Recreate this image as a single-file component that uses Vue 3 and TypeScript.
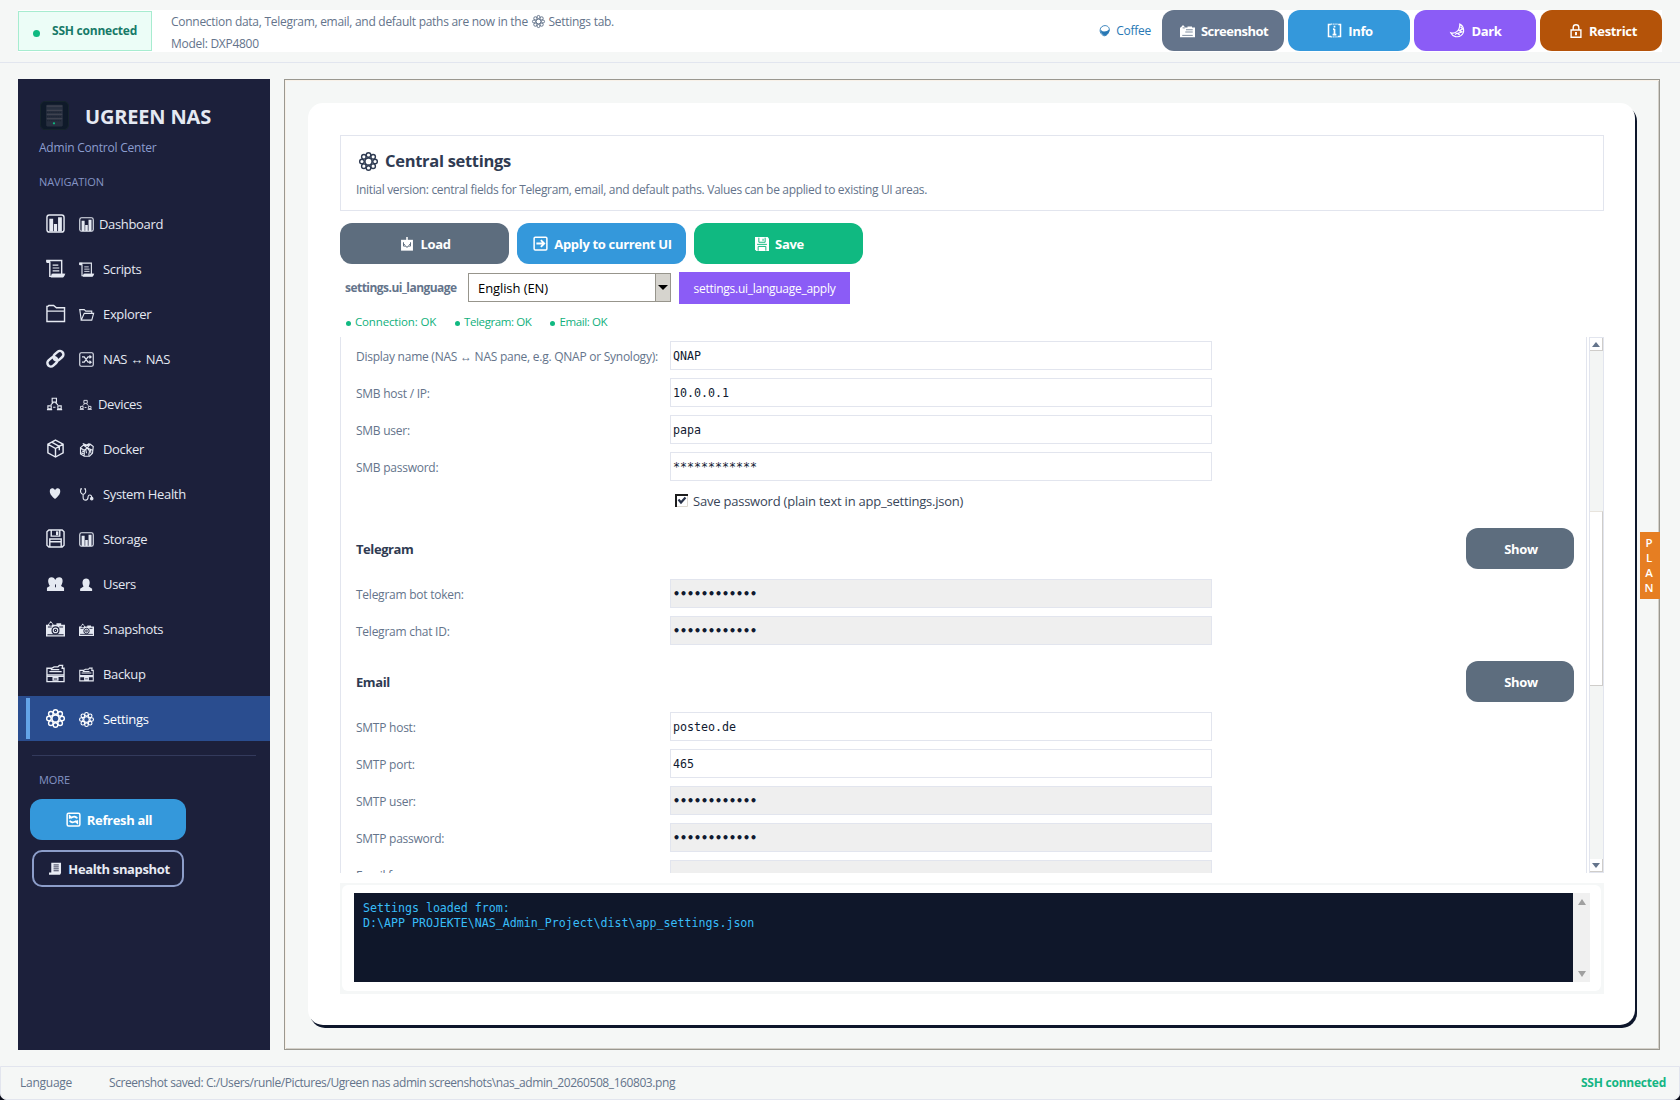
<script setup lang="ts">
interface NavItem {
  icon: string
  small: string
  label: string
  shift?: number
}

interface Field {
  label: string
  value: string
  masked?: boolean
}

const gearPetals = Array.from({ length: 8 }, (_, i) => {
  const a = (i * Math.PI) / 4
  const x = (10 + Math.cos(a) * 6.9).toFixed(2)
  const y = (10 + Math.sin(a) * 6.9).toFixed(2)
  return `<circle cx="${x}" cy="${y}" r="2.4"/>`
}).join('')

const icons: Record<string, string> = {
  chart:
    '<rect x="1" y="1" width="18" height="18" rx="2.5"/><path fill="currentColor" stroke="none" d="M3.500 5h4v13.500h-4zM8.300 10.500h3.400v8H8.300zM12.700 3.500h4v15h-4z"/>',
  scroll:
    '<path d="M1 3.500V1.500h15.500v15M4 3.500v14.800h13.500l1.500-2H7M1 3.500h3"/><path d="M7 6.500h6M7 9.500h7M7 12.500h7" stroke-width="1.200"/><path fill="currentColor" stroke="none" d="M6 15.500h13.500v2L18 19.500H5zM.500 1h4v3H.500z"/>',
  folder: '<path d="M1 18.500V2.500h1l1-1h5l3 2.500h8.500v14.500zM1 7.500h18"/>',
  folderOpen: '<path d="M3 17.500 1 3.500h6l2 2h8v3M3 17.500l4-9h12.500l-2.500 9z"/>',
  link:
    '<g stroke-width="2.600" transform="rotate(-42 10 10)"><rect x="-.5" y="6.600" width="11.500" height="7.400" rx="3.700"/><rect x="8.500" y="6.200" width="11.500" height="7.400" rx="3.700"/></g>',
  shuffle:
    '<rect x="1" y="1" width="18" height="18" rx="2"/><path d="M4 6.500h3l5 7h4M4 13.500h3l5-7h4M14 4.500l2.200 2-2.200 2M14 11.500l2.200 2-2.200 2" stroke-width="1.600"/>',
  network:
    '<path d="M6.500 4.500h4.500v4H6.500zM2 12.500h3.500v3H2zM12.500 12.500H16v3h-3.500zM7.500 9l-2.500 2.500M10 9l2.500 2.500M1 16.500h5.500M11.500 16.500h5.500M7.500 14h2.500" stroke-width="1.200"/>',
  box:
    '<path d="M10 1.200 18 5.500v9L10 19l-8-4.500v-9zM2 5.500l8 4.500 8-4.500M10 10v9M6 3.300l8 4.500v4"/>',
  whale:
    '<path d="M2 7.500 6 4l5 1 4-2 4 3-1 9-4 4H7l-5-3zM2 8l5 3 4-3 7 3M7 11v7M11 8l3 4-1 6M4 12l3 1M6 4l5 4 4-5M5 2l5 2 4-2M3 14.500l3 1M9 10l1 5M15 9l1 6"/>',
  heart:
    '<path fill="currentColor" stroke="none" d="M9.500 15.800C7 13.500 4 11 4 7.500 4 3.800 8 3.600 9.500 6.500 11 3.600 15 3.800 15 7.500c0 3.500-3 6-5.500 8.300z"/>',
  stetho:
    '<path d="M4 2.500H2.500C1.500 6 2 9 5.500 10 9 9 9.500 6 8.500 2.500H7M5.500 10v4c0 5 6.500 4.500 6.500 0 0-5 5-4 5 0" /><circle cx="17" cy="15.500" r="1.600" fill="currentColor"/>',
  floppy:
    '<path d="M1 3l2-2h14l2 2v14l-2 2H3l-2-2zM5.500 1v6.500h9V1M4 19v-8.500h12V19M4 13.500h12"/><path fill="currentColor" stroke="none" d="M10.500 2.500h2.500v4h-2.500z"/>',
  users:
    '<path fill="currentColor" stroke="none" d="M1 18v-3.500l3-2C1.500 9 1.500 3.500 5.800 3.500 8 3.500 9.200 5 9.700 6.300 10.300 5 11.700 3.500 14 3.500c4.300 0 4.300 5.500 1.800 9L19 14.500V18z"/><path d="M10 11v3" stroke="var(--hole)" stroke-width="1"/>',
  user:
    '<path fill="currentColor" stroke="none" d="M1.500 18.500v-3L6 12.500C3.500 8 4.500 2 9.500 2s6 6 3.500 10.500l4.500 3v3z"/>',
  camera:
    '<path fill="currentColor" stroke="none" d="M0 6h2l3-4 3 4h3V4.500h5V6h4v12.500H0z"/><path fill="none" stroke="var(--hole)" stroke-width="1.100" d="M2 8.500h4M14 8.500h4M1.500 16.500h17"/><circle cx="10" cy="12" r="3.600" fill="currentColor" stroke="var(--hole)" stroke-width="1.300"/><circle cx="10" cy="12" r="1.200" stroke="var(--hole)" stroke-width="1.200"/><circle cx="5" cy="5.500" r="1.600" fill="var(--hole)" stroke="none"/>',
  cameraSolid:
    '<path fill="currentColor" stroke="none" d="M0 6h1l3-3.500L7 6h3V4.500h6V6h4v13H0z"/><path stroke="var(--hole)" stroke-width="1.100" d="M8 9h9M7 12h10M3 16.500h14M3.500 6.500h3"/>',
  cabinet:
    '<path d="M1 4.500h5L8.500 3h4L14 1.500h3.500l-.5 3h2V18.500H1zM1 11.500h18M3.500 8h13M5 6h9M1 13h18M7.500 14.500h5V17h-5z" stroke-width="1.400"/>',
  gear: gearPetals + '<circle cx="10" cy="10" r="3.700"/>',
  coffee:
    '<path d="M2 8c0-4 4-7 8-7s8 3 7 8-5 9-8 9-8-5-7-10z"/><path fill="currentColor" d="M3 9c4 4 10 3 14-1-1 6-4 9-7 9s-6-3-7-8z"/>',
  info:
    '<path d="M5 2H2v16h3.500M15 2h3v16h-3.500" stroke-width="2"/><path d="M5 1.500h10M5 18.500h10" stroke-width="1.500" stroke-dasharray="1.500 1"/><path d="M10 3.500v2.400M10 8v7.500M7.500 15.500h5M8 8.200h2" stroke-width="2.300"/>',
  moon:
    '<path d="M13 1.500c6 3 7 11 2 15-4.500 3.500-11.500 2-14-3.500 5 2 12.500-2 12-11.500z"/><path d="M14 5l3 3-5 2 4 2-6 2 3 2M7 15.500l2-2M13 11l2-2" stroke-width="1.700"/>',
  lock:
    '<path d="M3 8.500h14v10.500H3zM6 8.500V5c0-5.200 8-5.200 8 0v3.500" stroke-width="2"/><path d="M10 11.500v4.500" stroke-width="2.800"/>',
  inbox:
    '<path fill="currentColor" stroke="none" d="M1.500 4h17v15.500h-17z"/><path stroke="var(--hole)" stroke-width="1.400" d="M5 7.500v5.500h3.500l1.500 2 1.500-2H15V7.500M5 9.500l2.500 2.500M15 9.500l-2.500 2.500"/><path d="M10 0v9.500M6.500 5.500 10 9l3.500-3.500" stroke-width="2.200"/>',
  arrow:
    '<rect x="1.500" y="1.500" width="17" height="17" rx="1.500" stroke-width="2"/><path d="M4.500 10h10M10.500 5.500l4.500 4.500-4.500 4.500" stroke-width="2.400"/>',
  save:
    '<path fill="currentColor" stroke="none" d="M0 0h18l2 2v18H2l-2-2z"/><path stroke="var(--hole)" stroke-width="1.400" d="M5.500 1v6.500h9V1M11.500 2.500v3M3 10.500h14M4.500 19.500V13.500h11v6"/>',
  refresh:
    '<rect x="1.500" y="1.500" width="17" height="17" rx="2" stroke-width="2"/><path d="M5 9V5.500l2.500 2c3-2 6-1.500 7.500 1M15 11v3.500l-2.500-2c-3 2-6 1.500-7.500-1" stroke-width="2.400"/>',
  report:
    '<path fill="currentColor" stroke="none" d="M3.500 1h15v16L17 19.500H0V16h3.500z"/><path stroke="var(--hole)" stroke-width="1.300" d="M7 4.500h8M7 7.500h8M7 10.500h8M7 13.500h8"/>',
}

const nav: NavItem[] = [
  { icon: 'chart', small: 'chart', label: 'Dashboard', shift: -4 },
  { icon: 'scroll', small: 'scroll', label: 'Scripts' },
  { icon: 'folder', small: 'folderOpen', label: 'Explorer' },
  { icon: 'link', small: 'shuffle', label: 'NAS ↔ NAS' },
  { icon: 'network', small: 'network', label: 'Devices', shift: -5 },
  { icon: 'box', small: 'whale', label: 'Docker' },
  { icon: 'heart', small: 'stetho', label: 'System Health' },
  { icon: 'floppy', small: 'chart', label: 'Storage' },
  { icon: 'users', small: 'user', label: 'Users' },
  { icon: 'camera', small: 'camera', label: 'Snapshots' },
  { icon: 'cabinet', small: 'cabinet', label: 'Backup' },
  { icon: 'gear', small: 'gear', label: 'Settings' },
]

const active = 'Settings'
const mask = '••••••••••••'

const smb: Field[] = [
  { label: 'Display name (NAS ↔ NAS pane, e.g. QNAP or Synology):', value: 'QNAP' },
  { label: 'SMB host / IP:', value: '10.0.0.1' },
  { label: 'SMB user:', value: 'papa' },
  { label: 'SMB password:', value: '************' },
]
const telegram: Field[] = [
  { label: 'Telegram bot token:', value: mask, masked: true },
  { label: 'Telegram chat ID:', value: mask, masked: true },
]
const email: Field[] = [
  { label: 'SMTP host:', value: 'posteo.de' },
  { label: 'SMTP port:', value: '465' },
  { label: 'SMTP user:', value: mask, masked: true },
  { label: 'SMTP password:', value: mask, masked: true },
  { label: 'Email from:', value: '', masked: true },
]
const sections = [
  { title: '', fields: smb },
  { title: 'Telegram', fields: telegram },
  { title: 'Email', fields: email },
]
const statuses = ['Connection: OK', 'Telegram: OK', 'Email: OK']
const plan = ['P', 'L', 'A', 'N']
</script>

<template>
  <div class="app">
    <header class="top">
      <div class="band">
        <div class="badge"><i class="dot"></i><b>SSH connected</b></div>
        <div class="hints">
          <p>
            Connection data, Telegram, email, and default paths are now in the
            <svg class="ic g13" viewBox="0 0 20 20" v-html="icons.gear" />
            Settings tab.
          </p>
          <p>Model: DXP4800</p>
        </div>
        <span class="coffee"><svg class="ic" viewBox="0 0 20 20" v-html="icons.coffee" />Coffee</span>
        <div class="actions">
          <button class="btn slate"><svg class="ic w15" viewBox="0 0 20 20" v-html="icons.cameraSolid" /><span class="tight">Screenshot</span></button>
          <button class="btn blue"><svg class="ic w15" viewBox="0 0 20 20" v-html="icons.info" />Info</button>
          <button class="btn violet"><svg class="ic w15" viewBox="0 0 20 20" v-html="icons.moon" />Dark</button>
          <button class="btn rust"><svg class="ic w14" viewBox="0 0 20 20" v-html="icons.lock" />Restrict</button>
        </div>
      </div>
    </header>

    <div class="main">
      <aside class="side">
        <div class="brand">
          <svg class="logo" viewBox="0 0 28 28">
            <rect x=".5" y=".5" width="27" height="27" rx="4.500" fill="#0f1a2a" stroke="#16242c" />
            <rect x="6" y="3.500" width="16" height="21" rx="1" fill="#283040" />
            <path d="M6.500 5h15M6.500 9h15M6.500 13h15M6.500 17h15" stroke="#3f4350" stroke-width="1.200" />
            <path d="M7 11h14M7 15h14M7 19h14" stroke="#1b2230" stroke-width="1.200" stroke-dasharray="1 1" />
            <circle cx="13.500" cy="21.500" r="1.100" fill="#10b981" />
          </svg>
          <h1>UGREEN NAS</h1>
        </div>
        <p class="sub">Admin Control Center</p>
        <p class="cap">NAVIGATION</p>
        <nav>
          <a v-for="n in nav" :key="n.label" :class="['item', { on: n.label === active }]">
            <i class="bar"></i>
            <svg class="ic big" viewBox="0 0 20 20" v-html="icons[n.icon]" />
            <svg class="ic small" viewBox="0 0 20 20" v-html="icons[n.small]" />
            <span :style="{ marginLeft: (n.shift ?? 0) + 'px' }">{{ n.label }}</span>
          </a>
        </nav>
        <hr />
        <p class="cap more">MORE</p>
        <button class="btn blue refresh"><svg class="ic w15" viewBox="0 0 20 20" v-html="icons.refresh" />Refresh all</button>
        <button class="btn outline"><svg class="ic w13" viewBox="0 0 20 20" v-html="icons.report" />Health snapshot</button>
      </aside>

      <section class="frame">
        <div class="card">
          <div class="head">
            <h2><svg class="ic" viewBox="0 0 20 20" v-html="icons.gear" />Central settings</h2>
            <p>Initial version: central fields for Telegram, email, and default paths. Values can be applied to existing UI areas.</p>
          </div>
          <div class="tools">
            <button class="btn steel"><svg class="ic w14" viewBox="0 0 20 20" v-html="icons.inbox" />Load</button>
            <button class="btn blue"><svg class="ic w15" viewBox="0 0 20 20" v-html="icons.arrow" />Apply to current UI</button>
            <button class="btn green"><svg class="ic w14" viewBox="0 0 20 20" v-html="icons.save" />Save</button>
          </div>
          <div class="lang">
            <b>settings.ui_language</b>
            <div class="select"><span>English (EN)</span><i class="drop"><em></em></i></div>
            <button class="apply">settings.ui_language_apply</button>
          </div>
          <div class="states">
            <span v-for="s in statuses" :key="s"><i></i>{{ s }}</span>
          </div>

          <div class="scroller">
            <div class="form">
              <div v-for="s in sections" :key="s.title" class="group">
                <div v-if="s.title" class="ghead"><h3>{{ s.title }}</h3><button class="btn steel show">Show</button></div>
                <div v-for="f in s.fields" :key="f.label" class="row">
                  <label>{{ f.label }}</label>
                  <div :class="['input', { off: f.masked }]">{{ f.value }}</div>
                </div>
                <div v-if="!s.title" class="check">
                  <svg viewBox="0 0 13 13">
                    <path fill="#fff" d="M0 0h13v13H0z" />
                    <path d="M1 13V1h12" fill="none" stroke="#1c1c1c" stroke-width="2" />
                    <path d="M2 12.500h10.500V2" fill="none" stroke="#dedad2" />
                    <path d="M3.500 5.500l2.500 3 4.500-5" fill="none" stroke="#28334a" stroke-width="2.200" />
                  </svg>
                  Save password (plain text in app_settings.json)
                </div>
              </div>
            </div>
            <div class="sbar">
              <i class="end"><em class="up"></em></i>
              <i class="thumb"></i>
              <i class="end"><em class="down"></em></i>
            </div>
          </div>

          <div class="log">
            <div class="inner">
              <pre>Settings loaded from:
D:\APP PROJEKTE\NAS_Admin_Project\dist\app_settings.json</pre>
              <div class="lbar"><em class="up"></em><em class="down"></em></div>
            </div>
          </div>
        </div>
        <div class="plan"><b v-for="l in plan" :key="l">{{ l }}</b></div>
      </section>
    </div>

    <footer class="foot">
      <span class="lng">Language</span>
      <span class="saved">Screenshot saved: C:/Users/runle/Pictures/Ugreen nas admin screenshots\nas_admin_20260508_160803.png</span>
      <b>SSH connected</b>
    </footer>
  </div>
</template>

<style>
body {
  margin: 0;
  background: #0a0c18;
}
</style>

<style scoped>
* {
  box-sizing: border-box;
}
.app {
  width: 1680px;
  height: 1100px;
  display: flex;
  flex-direction: column;
  background: #f5f7f6;
  border-radius: 0 0 7px 7px;
  overflow: hidden;
  font: 12px/20px "Open Sans", "Noto Sans", sans-serif;
  letter-spacing: -0.3px;
  color: #64748b;
}
p, h1, h2, h3, pre {
  margin: 0;
}
.ic {
  display: inline-block;
  flex: none;
  width: 14px;
  height: 14px;
  overflow: visible;
  fill: none;
  stroke: currentColor;
  stroke-width: 1.5;
  --hole: #1c203b;
}
.w13 { width: 13px; height: 13px; }
.w14 { width: 14px; height: 14px; }
.w15 { width: 15px; height: 15px; }

.top {
  height: 63px;
  border-bottom: 1px solid #e2e6ef;
  padding: 10px 18px;
}
.band {
  height: 42px;
  background: #fff;
  display: flex;
}
.badge {
  width: 134px;
  height: 40px;
  margin-top: 1px;
  border: 1px solid #a7ecd0;
  background: #ecfdf7;
  display: flex;
  align-items: center;
  padding-left: 14px;
  color: #177a68;
  letter-spacing: -0.23px;
}
.badge .dot {
  width: 7px;
  height: 7px;
  border-radius: 50%;
  background: #10b981;
  margin: 4px 12px 0 0;
}
.hints {
  padding-left: 19px;
  flex: 1;
}
.hints p {
  height: 22px;
  line-height: 23px;
  letter-spacing: -0.28px;
}
.g13 {
  width: 13px;
  height: 13px;
  margin: 0 1px;
  vertical-align: -2px;
}
.coffee {
  color: #2878b5;
  line-height: 42px;
  letter-spacing: -0.25px;
  margin-right: 11px;
  display: flex;
  align-items: center;
  gap: 5px;
}
.coffee .ic {
  width: 12px;
  height: 12px;
}
.actions {
  display: flex;
  gap: 4px;
}
.btn {
  border: 0;
  height: 41px;
  width: 122px;
  padding: 0 0 0 2px;
  border-radius: 12px;
  color: #fff;
  font: bold 13px/20px "Open Sans", sans-serif;
  letter-spacing: -0.33px;
  display: flex;
  align-items: center;
  justify-content: center;
  gap: 6px;
  white-space: nowrap;
}
.tight { letter-spacing: -0.52px; }
.slate { background: #64748b; }
.slate .ic { --hole: #64748b; }
.blue { background: #3498db; }
.violet { background: #8b5cf6; }
.rust {
  background: #b45309;
  padding-left: 4px;
}
.steel { background: #5d6d7e; }
.steel .ic { --hole: #5d6d7e; }
.green { background: #10b981; }
.green .ic { --hole: #10b981; }

.main {
  display: flex;
  height: 971px;
  margin-top: 16px;
  padding: 0 18px;
}
.side {
  width: 252px;
  background: #1c203b;
  color: #e5e9f2;
}
.brand {
  display: flex;
  align-items: center;
  height: 28px;
  margin: 22px 0 0 22px;
}
.logo {
  width: 29px;
  height: 29px;
}
.brand h1 {
  font-size: 20px;
  line-height: 28px;
  letter-spacing: -0.17px;
  padding: 4px 0 0 16px;
}
.sub {
  margin: 9px 0 0 21px;
  color: #8c9dcf;
  letter-spacing: -0.22px;
}
.cap {
  margin: 14px 0 0 21px;
  font-size: 11px;
  color: #8494c4;
  letter-spacing: -0.08px;
}
nav {
  padding-top: 9px;
}
.item {
  height: 45px;
  display: flex;
  align-items: center;
  font-size: 13px;
  letter-spacing: -0.34px;
}
.bar {
  width: 4px;
  height: 41px;
  margin: 0 16px 0 8px;
}
.big {
  width: 19px;
  height: 19px;
  margin-right: 13px;
}
.small {
  width: 15px;
  height: 15px;
  margin: 1px 9px 0 1px;
}
.item.on {
  background: #2a4d8f;
  color: #fff;
}
.on .bar {
  background: #63a4e8;
}
hr {
  border: 0;
  height: 1px;
  background: #333a5c;
  margin: 14px 14px 0;
}
.more {
  margin-top: 14px;
}
.refresh {
  width: 156px;
  margin: 9px 0 0 12px;
}
.outline {
  width: 152px;
  height: 37px;
  margin: 10px 0 0 14px;
  padding-left: 3px;
  border: 2px solid #8c9dc9;
  border-radius: 10px;
  background: transparent;
  letter-spacing: -0.36px;
  color: #e8ebf4;
}

.frame {
  position: relative;
  width: 1376px;
  margin-left: 14px;
  border: 1px solid #9a9890;
  box-shadow: inset 1px 1px #f8f1e8, inset -1px -1px #d4d1ca;
  padding: 23px 23px 0;
}
.card {
  width: 1327px;
  height: 922px;
  background: #fff;
  border-radius: 15px;
  box-shadow: 2px 3px 0 #0d162b;
  padding: 32px 0 0 32px;
}
.head {
  width: 1264px;
  height: 76px;
  border: 1px solid #e2e5ee;
  padding: 13px 0 0 15px;
}
.head h2 {
  display: flex;
  align-items: center;
  gap: 7px;
  height: 24px;
  padding-left: 3px;
  font-size: 16.5px;
  letter-spacing: -0.3px;
  color: #2f3b52;
}
.head h2 .ic {
  width: 19px;
  height: 19px;
}
.head p {
  letter-spacing: -0.335px;
  margin-top: 7px;
}
.tools {
  display: flex;
  gap: 8px;
  margin-top: 12px;
}
.tools .btn {
  width: 169px;
}
.lang {
  display: flex;
  align-items: center;
  height: 32px;
  margin: 8px 0 0 5px;
}
.lang b {
  width: 123px;
  letter-spacing: -0.53px;
}
.select {
  width: 203px;
  height: 29px;
  margin-bottom: 1px;
  border: 1px solid #97958c;
  background: #fff;
  color: #000;
  font-size: 13px;
  line-height: 28px;
  letter-spacing: -0.09px;
  display: flex;
  justify-content: space-between;
  padding-left: 9px;
}
.drop {
  width: 15px;
  height: 27px;
  background: #d6d4ce;
  border-left: 1px solid #97958c;
  display: flex;
  align-items: center;
  justify-content: center;
}
.drop em {
  border: 5px solid transparent;
  border-top-color: #000;
  border-bottom: 0;
}
.apply {
  width: 171px;
  height: 32px;
  margin-left: 8px;
  padding: 0;
  border: 0;
  background: #8b5cf6;
  color: #fff;
  font: 12px "Open Sans", sans-serif;
  letter-spacing: -0.27px;
}
.states {
  display: flex;
  height: 20px;
  margin: 8px 0 5px 6px;
  color: #10b07c;
  font-size: 11.5px;
  letter-spacing: -0.4px;
}
.states span {
  display: flex;
  align-items: center;
  margin-right: 19px;
}
.states span:first-child {
  letter-spacing: -0.15px;
}
.states i {
  width: 5px;
  height: 5px;
  border-radius: 50%;
  background: #10b981;
  margin: 3px 4px 0 0;
}
.scroller {
  display: flex;
  justify-content: space-between;
  width: 1264px;
  height: 536px;
}
.form {
  width: 1247px;
  height: 536px;
  border: solid #e2e5ee;
  border-width: 0 1px;
  overflow: hidden;
  padding: 4px 0 0 15px;
}
.row {
  display: flex;
  height: 37px;
}
.row label {
  width: 314px;
  line-height: 31px;
  letter-spacing: -0.25px;
}
.input {
  width: 542px;
  height: 29px;
  border: 1px solid #e2e5ee;
  background: #fff;
  padding-left: 2px;
  font: 11.65px/29px "DejaVu Sans Mono", monospace;
  letter-spacing: 0;
  color: #101a30;
}
.input.off {
  background: #efefef;
  font-weight: bold;
}
.check {
  height: 39px;
  padding: 2px 0 0 319px;
  display: flex;
  align-items: flex-start;
  gap: 5px;
  font-size: 13px;
  line-height: 20px;
  letter-spacing: -0.22px;
  color: #384558;
}
.check svg {
  width: 13px;
  height: 13px;
  margin-top: 3px;
}
.ghead {
  height: 51px;
  display: flex;
  justify-content: space-between;
  padding-right: 12px;
}
.group + .group + .group {
  margin-top: 8px;
}
.ghead h3 {
  font-size: 13px;
  line-height: 42px;
  letter-spacing: -0.42px;
  color: #2f3b52;
}
.show {
  width: 108px;
}
.sbar {
  width: 15px;
  height: 536px;
  background: #f3f5f4;
  border: 1px solid #e2e5ee;
  display: flex;
  flex-direction: column;
}
.end {
  height: 13px;
  background: #fff;
  border: solid #cfcdca;
  border-width: 0 1px 1px 0;
  display: flex;
  align-items: center;
  justify-content: center;
}
em.up {
  border: 4.5px solid transparent;
  border-top: 0;
  border-bottom: 5px solid #64748b;
}
em.down {
  border: 4.5px solid transparent;
  border-bottom: 0;
  border-top: 5px solid #64748b;
}
.thumb {
  height: 175px;
  margin: 160px 0 auto;
  background: #fff;
  border: 1px solid #cfcdca;
  border-width: 1px 1px 1px 0;
  border-top-color: #e8e4dd;
}
.log {
  width: 1264px;
  height: 111px;
  margin-top: 10px;
  background: #f5f7f7;
  padding: 2px 3px 3px 2px;
}
.inner {
  height: 106px;
  background: #fff;
  border-radius: 6px;
  padding: 8px 0 0 12px;
  display: flex;
}
pre {
  width: 1219px;
  height: 89px;
  background: #0f172a;
  color: #38bdf8;
  padding: 8px 9px;
  font: 11.65px/15px "DejaVu Sans Mono", monospace;
  letter-spacing: -0.02px;
}
.lbar {
  width: 17px;
  height: 89px;
  background: #f0f0f0;
  display: flex;
  flex-direction: column;
  justify-content: space-between;
  align-items: center;
  padding: 6px 0 5px;
}
.lbar em.up { border-bottom-color: #a0a0a0; border-bottom-width: 6px; }
.lbar em.down { border-top-color: #a0a0a0; border-top-width: 6px; }
.plan {
  position: absolute;
  right: -1px;
  top: 452px;
  width: 20px;
  height: 67px;
  background: #e67e22;
  color: #fff;
  font-size: 11.5px;
  line-height: 15px;
  letter-spacing: 0;
  padding: 3px 2px 0 0;
  display: flex;
  flex-direction: column;
  align-items: center;
}
.plan b {
  font-weight: 600;
}
.foot {
  height: 34px;
  margin-top: 16px;
  border: 1px solid #e2e5ee;
  border-radius: 0 0 7px 7px;
  display: flex;
  line-height: 31px;
  padding: 0 13px 0 19px;
}
.lng {
  width: 89px;
  letter-spacing: -0.25px;
}
.saved {
  flex: 1;
  letter-spacing: -0.42px;
}
.foot b {
  color: #14b583;
  letter-spacing: -0.23px;
}
</style>
